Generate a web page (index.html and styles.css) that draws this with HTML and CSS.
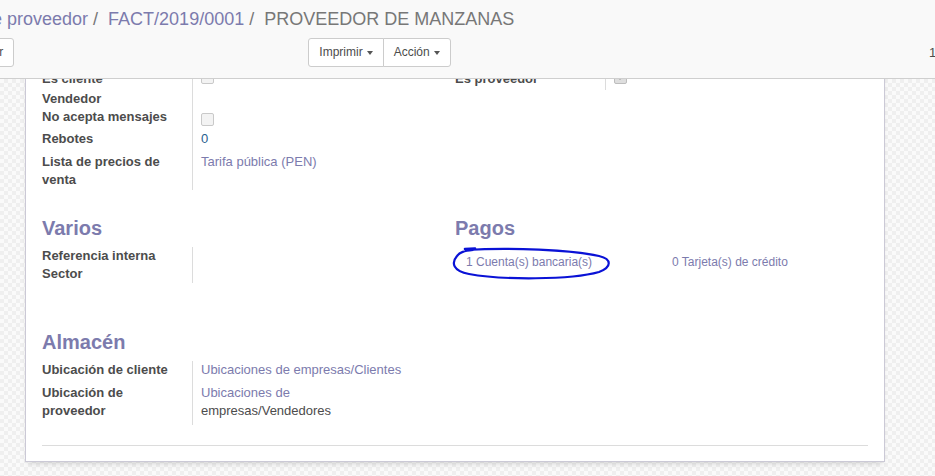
FILE: index.html
```html
<!DOCTYPE html>
<html lang="es">
<head>
<meta charset="utf-8">
<title>FACT/2019/0001</title>
<link rel="stylesheet" href="styles.css">
</head>
<body>
<header class="cp">
  <ol class="breadcrumb">
    <li class="crumb">de proveedor</li>
    <li class="sep">/</li>
    <li class="crumb">FACT/2019/0001</li>
    <li class="sep">/</li>
    <li class="active">PROVEEDOR DE MANZANAS</li>
  </ol>
  <div class="cp-bar">
    <button class="btn btn-edit">Editar</button>
    <div class="btn-group">
      <button class="btn btn-first">Imprimir<span class="caret"></span></button>
      <button class="btn btn-last">Acción<span class="caret"></span></button>
    </div>
    <div class="pager">1 / 1</div>
  </div>
</header>
<main class="content">
  <div class="sheet">
    <section class="sec">
      <div class="group">
        <div class="row tight">
          <div class="lbl">Es cliente</div>
          <div class="val"><span class="cb cb-top"></span></div>
        </div>
        <div class="row tight">
          <div class="lbl">Vendedor</div>
          <div class="val"></div>
        </div>
        <div class="row tight">
          <div class="lbl">No acepta mensajes</div>
          <div class="val"><span class="cb cb-mid"></span></div>
        </div>
        <div class="row">
          <div class="lbl">Rebotes</div>
          <div class="val num">0</div>
        </div>
        <div class="row row-list">
          <div class="lbl">Lista de precios de venta</div>
          <div class="val link">Tarifa pública (PEN)</div>
        </div>
      </div>
      <div class="group">
        <div class="row tight">
          <div class="lbl">Es proveedor</div>
          <div class="val"><span class="cb cb-top cb-checked"></span></div>
        </div>
      </div>
    </section>

    <section class="sec sec-misc">
      <div class="group">
        <h2 class="sep-h">Varios</h2>
        <div class="row tight">
          <div class="lbl">Referencia interna</div>
          <div class="val"></div>
        </div>
        <div class="row tight">
          <div class="lbl">Sector</div>
          <div class="val"></div>
        </div>
      </div>
      <div class="group">
        <h2 class="sep-h">Pagos</h2>
        <div class="stats">
          <span class="stat">1 Cuenta(s) bancaria(s)</span>
          <span class="stat">0 Tarjeta(s) de crédito</span>
          <svg class="scribble" width="165" height="40" viewBox="0 0 165 40" aria-hidden="true">
            <path d="M14 4 L24 3.5" stroke="#0a12d6" stroke-width="2.6" fill="none" stroke-linecap="round"/>
            <path d="M15 5 C 60 2, 120 5, 148 11 C 161 14, 161 22, 148 27 C 120 35, 50 35, 18 29 C 2 26, 0 18, 6 11 C 9 7, 13 6, 22 5" stroke="#0a12d6" stroke-width="2.2" fill="none" stroke-linecap="round"/>
          </svg>
        </div>
      </div>
    </section>

    <section class="sec sec-stock">
      <div class="group">
        <h2 class="sep-h">Almacén</h2>
        <div class="row tight">
          <div class="lbl">Ubicación de cliente</div>
          <div class="val link">Ubicaciones de empresas/Clientes</div>
        </div>
        <div class="row row-loc">
          <div class="lbl">Ubicación de proveedor</div>
          <div class="val"><span class="link">Ubicaciones de</span><br><span>empresas/Vendedores</span></div>
        </div>
      </div>
      <div class="group"></div>
    </section>

    <div class="rule"></div>
  </div>
</main>
</body>
</html>
```

FILE: styles.css
```css
html, body {
  margin: 0;
  padding: 0;
}

body {
  width: 935px;
  height: 476px;
  overflow: hidden;
  background: #fff;
  font-family: "Liberation Sans", Arial, sans-serif;
  color: #4c4c4c;
}

/* ---------- control panel ---------- */
.cp {
  box-sizing: border-box;
  height: 79px;
  padding-top: 8px;
  background: #f9f9f9;
  border-bottom: 1px solid #cfcfcf;
}

.breadcrumb {
  display: flex;
  margin: 0 0 0 -18px;
  padding: 0;
  list-style: none;
  font-size: 18px;
  line-height: 22px;
  white-space: nowrap;
}

.crumb {
  color: #7c7bad;
}

.sep {
  margin: 0 10px 0 5px;
  color: #777;
}

.active {
  color: #777;
}

.cp-bar {
  display: flex;
  margin-top: 8px;
  height: 29px;
}

.btn {
  box-sizing: border-box;
  height: 29px;
  padding: 0 10px;
  border: 1px solid #ccc;
  border-radius: 3px;
  background: #fff;
  color: #4c4c4c;
  font-family: "Liberation Sans", Arial, sans-serif;
  font-size: 12px;
  line-height: 27px;
  display: flex;
  align-items: center;
}

.btn-edit {
  margin-left: -39px;
}

.btn-group {
  display: flex;
  margin-left: 294px;
}

.btn-first {
  border-radius: 3px 0 0 3px;
}

.btn-last {
  margin-left: -1px;
  border-radius: 0 3px 3px 0;
}

.caret {
  display: inline-block;
  width: 0;
  height: 0;
  margin-left: 4px;
  border-top: 4px solid #555;
  border-left: 3.5px solid transparent;
  border-right: 3.5px solid transparent;
}

.pager {
  margin-left: auto;
  width: 6px;
  font-size: 13px;
  line-height: 29px;
  white-space: nowrap;
}

/* ---------- content ---------- */
.content {
  height: 397px;
  overflow: hidden;
  background-color: #f7f7f7;
  background-image: repeating-conic-gradient(#efefef 0 25%, #fafafa 0 50%);
  background-size: 8px 8px;
}

.sheet {
  box-sizing: border-box;
  width: 860px;
  margin: -26px 0 0 25px;
  padding: 16px 16px 15px;
  background: #fff;
  border: 1px solid #cbc9d6;
  box-shadow: 0 4px 6px -3px rgba(0, 0, 0, 0.18);
}

.sec {
  display: grid;
  grid-template-columns: 413px 413px;
}

.sec-misc {
  margin-top: 26px;
}

.sec-stock {
  margin-top: 47px;
}

.sep-h {
  margin: 0 0 7px;
  font-size: 20px;
  line-height: 24px;
  font-weight: bold;
  color: #7c7bad;
}

.row {
  display: grid;
  grid-template-columns: 150px 1fr;
  font-size: 13px;
  line-height: 18px;
}

.lbl {
  padding: 2px 8px 2px 0;
  font-weight: bold;
  color: #4c4c4c;
}

.val {
  padding: 2px 0 2px 8px;
  border-left: 1px solid #dcdcdc;
}

.row.tight .lbl,
.row.tight .val {
  padding-top: 0;
  padding-bottom: 0;
}

.row-list .lbl,
.row-list .val {
  padding-top: 3px;
  padding-bottom: 1px;
}

.row-loc .lbl,
.row-loc .val {
  padding-top: 5px;
  padding-bottom: 5px;
}

.link {
  color: #7c7bad;
}

.num {
  color: #28608f;
}

.cb {
  display: block;
  box-sizing: border-box;
  width: 13px;
  height: 13px;
  border: 1px solid #c9c9c9;
  border-radius: 2px;
  background: #f3f3f3;
  position: relative;
}

.cb-top {
  margin: 1px 0 6px;
}

.cb-mid {
  margin: 5px 0 2px;
}

.cb-checked {
  background: #dedede;
  border-color: #bdbdbd;
}

.cb-checked::after {
  content: "";
  position: absolute;
  left: 2px;
  top: 3px;
  width: 0;
  height: 0;
  border-top: 5px solid #7a7a7a;
  border-left: 3.5px solid transparent;
  border-right: 3.5px solid transparent;
}

.stats {
  position: relative;
  display: grid;
  grid-template-columns: 206px 206px;
  padding-top: 6px;
}

.stat {
  padding-left: 11px;
  font-size: 12px;
  line-height: 18px;
  color: #7c7bad;
  white-space: nowrap;
}

.scribble {
  position: absolute;
  left: -4px;
  top: -2px;
  overflow: visible;
}

.rule {
  margin-top: 20px;
  border-top: 1px solid #dcdcdc;
}
```
